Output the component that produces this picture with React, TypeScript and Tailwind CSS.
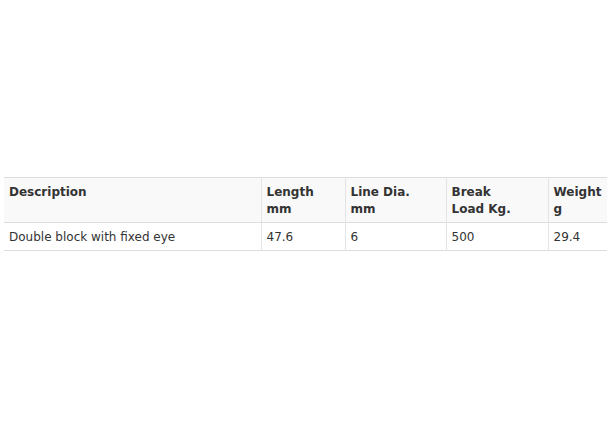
const headers = [
  { lines: ['Description'], w: 'w-[257px]' },
  { lines: ['Length', 'mm'], w: 'w-[84px]' },
  { lines: ['Line Dia.', 'mm'], w: 'w-[101px]' },
  { lines: ['Break', 'Load Kg.'], w: 'w-[102px]' },
  { lines: ['Weight', 'g'], w: 'w-[59px]' },
];

const row = ['Double block with fixed eye', '47.6', '6', '500', '29.4'];

export default function App() {
  return (
    <div className="w-[610px] h-[441px] bg-white pt-[177px] pl-[4px] font-['DejaVu_Sans',Verdana,sans-serif] text-[12px] leading-[17px] text-[#333]">
      <table className="table-fixed w-[603px] border-collapse">
        <thead>
          <tr className="bg-[#f9f9f9] border-t border-b border-[#dddddd]">
            {headers.map((h, i) => (
              <th
                key={i}
                className={`${h.w} text-left align-top font-bold px-[5px] pt-[6px] pb-[4px] ${i > 0 ? 'border-l border-[#e4e4e4]' : ''}`}
              >
                {h.lines.map((l, j) => (
                  <div key={j}>{l}</div>
                ))}
              </th>
            ))}
          </tr>
        </thead>
        <tbody>
          <tr className="border-b border-[#dddddd]">
            {row.map((c, i) => (
              <td
                key={i}
                className={`text-left align-top px-[5px] pt-[6px] pb-[4px] ${i > 0 ? 'border-l border-[#e4e4e4]' : ''}`}
              >
                {c}
              </td>
            ))}
          </tr>
        </tbody>
      </table>
    </div>
  );
}
